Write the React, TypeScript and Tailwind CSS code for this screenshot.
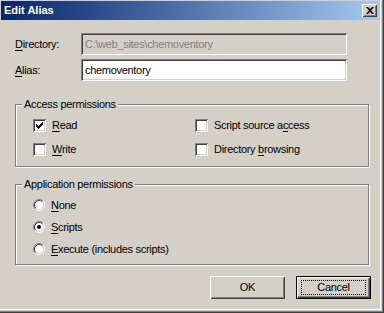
import React, { useState } from 'react';

const sunken =
  'shadow-[inset_1px_1px_0_#808080,inset_-1px_-1px_0_#fff,inset_2px_2px_0_#404040,inset_-2px_-2px_0_#d4d0c8]';
const raised =
  'shadow-[inset_1px_1px_0_#fff,inset_-1px_-1px_0_#404040,inset_2px_2px_0_#d4d0c8,inset_-2px_-2px_0_#808080]';

const Key: React.FC<{ children: React.ReactNode }> = ({ children }) => (
  <span className="underline underline-offset-[2px]">{children}</span>
);

const CheckBox: React.FC<{ checked: boolean; onClick: () => void; children: React.ReactNode }> = ({
  checked,
  onClick,
  children,
}) => (
  <div className="flex items-center h-[13px] cursor-default" onClick={onClick}>
    <div className={`w-[13px] h-[13px] bg-white flex items-center justify-center ${sunken}`}>
      {checked && (
        <svg width="7" height="7" viewBox="0 0 7 7">
          <path d="M0 2h1v1h1v1h1v-1h1v-1h1v-1h1v-1h1v3h-1v1h-1v1h-1v1h-1v1h-1v-1h-1v-1h-1z" fill="#000" />
        </svg>
      )}
    </div>
    <span className="ml-[6px]">{children}</span>
  </div>
);

const Radio: React.FC<{ checked: boolean; onClick: () => void; children: React.ReactNode }> = ({
  checked,
  onClick,
  children,
}) => (
  <div className="flex items-center h-[12px] cursor-default" onClick={onClick}>
    <svg width="12" height="12" viewBox="0 0 12 12">
      <circle cx="6" cy="6" r="4.5" fill="#fff" />
      <path d="M2.11 9.89A5.5 5.5 0 0 1 9.89 2.11" stroke="#808080" fill="none" />
      <path d="M9.89 2.11A5.5 5.5 0 0 1 2.11 9.89" stroke="#fff" fill="none" />
      <path d="M2.82 9.18A4.5 4.5 0 0 1 9.18 2.82" stroke="#404040" fill="none" />
      <path d="M9.18 2.82A4.5 4.5 0 0 1 2.82 9.18" stroke="#d4d0c8" fill="none" />
      {checked && <circle cx="6" cy="6" r="2" fill="#000" />}
    </svg>
    <span className="ml-[6px]">{children}</span>
  </div>
);

const GroupBox: React.FC<{ title: string; className: string; children: React.ReactNode }> = ({
  title,
  className,
  children,
}) => (
  <div
    className={`relative w-[354px] border border-[#808080] shadow-[inset_1px_1px_0_#fff,1px_1px_0_#fff] ${className}`}
  >
    <span className="absolute left-[6px] top-[-8px] px-[2px] bg-[#d4d0c8] leading-[14px]">{title}</span>
    {children}
  </div>
);

const App: React.FC = () => {
  const [read, setRead] = useState(true);
  const [write, setWrite] = useState(false);
  const [source, setSource] = useState(false);
  const [browse, setBrowse] = useState(false);
  const [perm, setPerm] = useState('scripts');
  const [alias, setAlias] = useState('chemoventory');

  return (
    <div
      className="w-[384px] h-[313px] bg-[#d4d0c8] text-black text-[11px] tracking-[-0.3px] flex flex-col pl-[1px] pt-[1px] pr-[4px] pb-[2px] shadow-[inset_-1px_-1px_0_#404040,inset_-2px_-2px_0_#808080,inset_-3px_-3px_0_#d4d0c8,inset_-4px_-4px_0_#fff]"
      style={{ fontFamily: '"Liberation Sans", Arial, sans-serif' }}
    >
      <div className="h-[19px] flex items-center justify-between pl-[3px] pr-[2px] bg-gradient-to-r from-[#0a246a] to-[#a6caf0]">
        <span className="text-white font-bold tracking-normal leading-none">Edit Alias</span>
        <div className={`w-[15px] h-[13px] mr-[1px] bg-[#d4d0c8] flex items-center justify-center ${raised}`}>
          <svg width="8" height="7" viewBox="0 0 8 7">
            <path d="M0 0h2l2 2.3 2-2.3h2l-3 3.5 3 3.5h-2l-2-2.3-2 2.3h-2l3-3.5z" fill="#000" />
          </svg>
        </div>
      </div>

      <div className="flex flex-col pl-[14px] pt-[13px]">
        <div className="flex items-center h-[22px]">
          <span className="w-[66px] text-[#000]">
            <Key>D</Key>irectory:
          </span>
          <div className={`w-[266px] h-[22px] flex items-center px-[4px] text-[#808080] ${sunken}`}>
            C:\web_sites\chemoventory
          </div>
        </div>
        <div className="flex items-center h-[22px] mt-[4px]">
          <span className="w-[66px]">
            <Key>A</Key>lias:
          </span>
          <input
            value={alias}
            onChange={(e) => setAlias(e.target.value)}
            className={`w-[266px] h-[22px] px-[4px] bg-white outline-none ${sunken}`}
          />
        </div>

        <GroupBox title="Access permissions" className="mt-[23px] h-[63px] pt-[14px] pl-[17px]">
          <div className="grid grid-cols-[162px_1fr] gap-y-[11px]">
            <CheckBox checked={read} onClick={() => setRead(!read)}>
              <Key>R</Key>ead
            </CheckBox>
            <CheckBox checked={source} onClick={() => setSource(!source)}>
              Script source a<Key>c</Key>cess
            </CheckBox>
            <CheckBox checked={write} onClick={() => setWrite(!write)}>
              <Key>W</Key>rite
            </CheckBox>
            <CheckBox checked={browse} onClick={() => setBrowse(!browse)}>
              Directory <Key>b</Key>rowsing
            </CheckBox>
          </div>
        </GroupBox>

        <GroupBox title="Application permissions" className="mt-[17px] h-[81px] pt-[14px] pl-[17px]">
          <div className="flex flex-col gap-[10px]">
            <Radio checked={perm === 'none'} onClick={() => setPerm('none')}>
              <Key>N</Key>one
            </Radio>
            <Radio checked={perm === 'scripts'} onClick={() => setPerm('scripts')}>
              <Key>S</Key>cripts
            </Radio>
            <Radio checked={perm === 'execute'} onClick={() => setPerm('execute')}>
              <Key>E</Key>xecute (includes scripts)
            </Radio>
          </div>
        </GroupBox>

        <div className="flex justify-end gap-[11px] mt-[11px] pr-[9px]">
          <button className={`w-[75px] h-[23px] bg-[#d4d0c8] ${raised}`}>OK</button>
          <button
            className={`w-[75px] h-[23px] bg-[#d4d0c8] border border-black flex items-center justify-center shadow-[inset_1px_1px_0_#fff,inset_-1px_-1px_0_#404040,inset_-2px_-2px_0_#808080]`}
          >
            <span className="w-[65px] h-[15px] border border-dotted border-black flex items-center justify-center">
              Cancel
            </span>
          </button>
        </div>
      </div>
    </div>
  );
};

export default App;
